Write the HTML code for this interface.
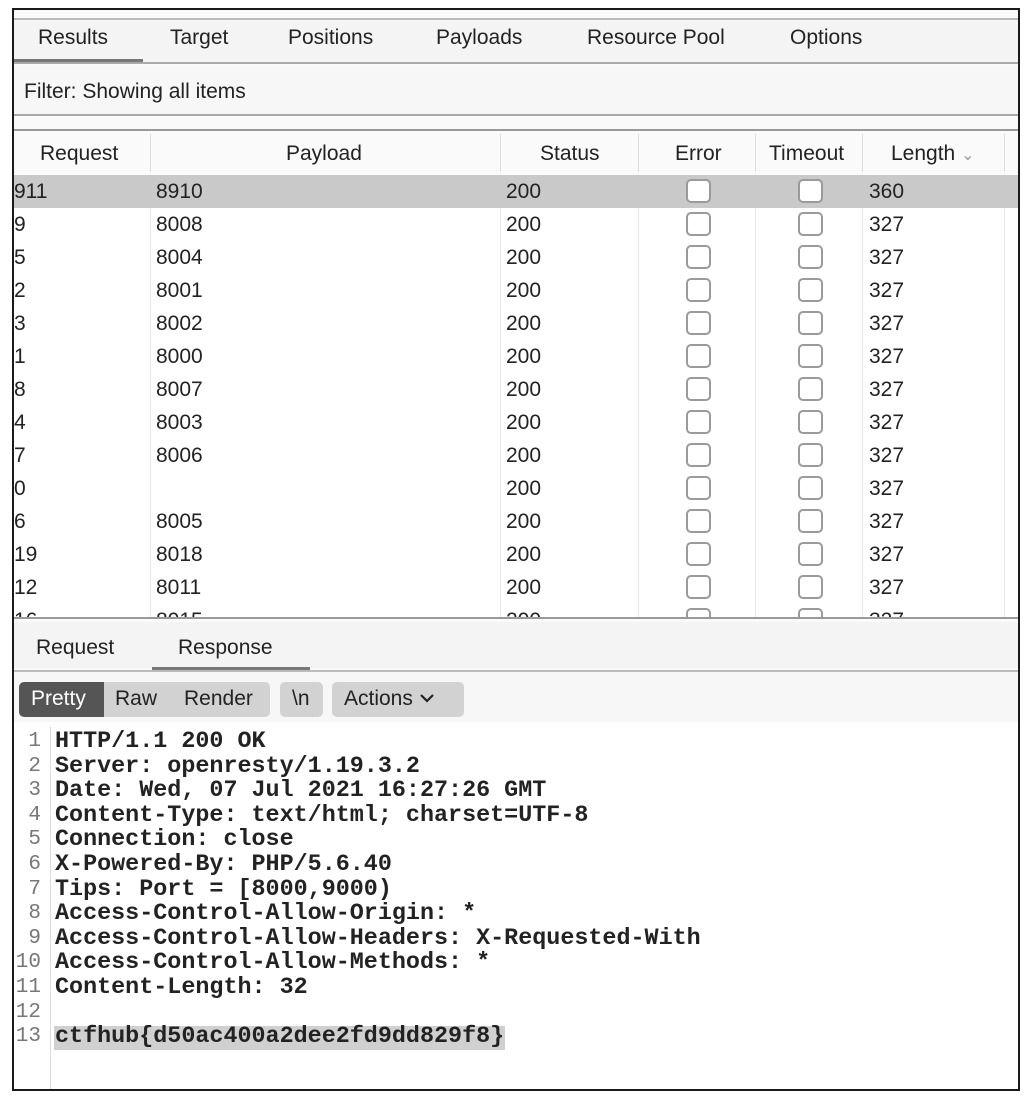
<!DOCTYPE html>
<html><head><meta charset="utf-8"><style>
*{margin:0;padding:0;box-sizing:border-box}
body{width:1032px;height:1099px;background:#fff;position:relative;overflow:hidden;font-family:"Liberation Sans",sans-serif;color:#222}
.abs{position:absolute}
.frame{left:12px;top:8px;width:1008px;height:1083px;border:2px solid #1a1a1a;background:#fafafa;overflow:hidden}
.t{position:absolute;font-size:21px;white-space:nowrap}
.hl{position:absolute;height:1px;background:#aaa}
.cb{position:absolute;width:25px;height:24px;border:2px solid #9a9a9a;border-radius:5px;background:#fff}
.row{position:absolute;left:0;width:1004px;height:33px}
.row span{position:absolute;top:5px;font-size:21px}
.vd{position:absolute;width:1px;background:#e8e8e8}
.code{position:absolute;left:0;font-family:"Liberation Mono",monospace;font-size:23.4px;font-weight:bold;line-height:24.6px;white-space:pre;color:#222}
.ln{position:absolute;left:0;width:27px;text-align:right;font-family:"Liberation Mono",monospace;font-size:21px;line-height:24.6px;color:#777;white-space:pre}
</style></head><body>
<div class="abs frame">
 <div class="hl" style="left:0;top:8px;width:1004px;background:#bbb;height:2px"></div>
 <div class="abs" style="left:0;top:10px;width:1004px;height:44px;background:#f4f4f4"></div>
 <span class="t" style="left:24px;top:16px">Results</span>
 <span class="t" style="left:156px;top:16px">Target</span>
 <span class="t" style="left:274px;top:16px">Positions</span>
 <span class="t" style="left:422px;top:16px">Payloads</span>
 <span class="t" style="left:573px;top:16px">Resource Pool</span>
 <span class="t" style="left:776px;top:16px">Options</span>
 <div class="abs" style="left:0;top:49px;width:129px;height:3px;background:#777"></div>
 <div class="hl" style="left:0;top:52px;width:1004px;background:#aaa;height:2px"></div>
 <div class="abs" style="left:0;top:56px;width:1004px;height:48px;background:#f7f7f7"></div>
 <span class="t" style="left:10px;top:70px">Filter: Showing all items</span>
 <div class="hl" style="left:0;top:104px;width:1004px;background:#aaa;height:2px"></div>
 <div class="hl" style="left:0;top:119px;width:1004px;background:#999;height:2px"></div>
 <div class="abs" style="left:0;top:121px;width:1004px;height:43px;background:#fafafa"></div>
 <div class="vd" style="left:136px;top:124px;height:38px;background:#ddd"></div>
 <div class="vd" style="left:486px;top:124px;height:38px;background:#ddd"></div>
 <div class="vd" style="left:624px;top:124px;height:38px;background:#ddd"></div>
 <div class="vd" style="left:741px;top:124px;height:38px;background:#ddd"></div>
 <div class="vd" style="left:848px;top:124px;height:38px;background:#ddd"></div>
 <div class="vd" style="left:990px;top:124px;height:38px;background:#ddd"></div>
 <span class="t" style="left:26px;top:132px">Request</span>
 <span class="t" style="left:272px;top:132px">Payload</span>
 <span class="t" style="left:526px;top:132px">Status</span>
 <span class="t" style="left:661px;top:132px">Error</span>
 <span class="t" style="left:755px;top:132px">Timeout</span>
 <span class="t" style="left:877px;top:132px">Length <span style="color:#999;font-size:16px">&#8964;</span></span>
 <div class="abs" style="left:0;top:164px;width:1004px;height:444px;background:#fff;overflow:hidden">
  <div class="vd" style="left:136px;top:0;height:444px"></div>
  <div class="vd" style="left:486px;top:0;height:444px"></div>
  <div class="vd" style="left:624px;top:0;height:444px"></div>
  <div class="vd" style="left:741px;top:0;height:444px"></div>
  <div class="vd" style="left:848px;top:0;height:444px"></div>
  <div class="vd" style="left:990px;top:0;height:444px"></div>
  <div class="row" style="top:1px;background:#c9c9c9"><span style="left:0">911</span><span style="left:142px">8910</span><span style="left:492px">200</span><span style="left:855px">360</span><div class="cb" style="left:672px;top:4px"></div><div class="cb" style="left:784px;top:4px"></div></div>
  <div class="row" style="top:34px"><span style="left:0">9</span><span style="left:142px">8008</span><span style="left:492px">200</span><span style="left:855px">327</span><div class="cb" style="left:672px;top:4px"></div><div class="cb" style="left:784px;top:4px"></div></div>
  <div class="row" style="top:67px"><span style="left:0">5</span><span style="left:142px">8004</span><span style="left:492px">200</span><span style="left:855px">327</span><div class="cb" style="left:672px;top:4px"></div><div class="cb" style="left:784px;top:4px"></div></div>
  <div class="row" style="top:100px"><span style="left:0">2</span><span style="left:142px">8001</span><span style="left:492px">200</span><span style="left:855px">327</span><div class="cb" style="left:672px;top:4px"></div><div class="cb" style="left:784px;top:4px"></div></div>
  <div class="row" style="top:133px"><span style="left:0">3</span><span style="left:142px">8002</span><span style="left:492px">200</span><span style="left:855px">327</span><div class="cb" style="left:672px;top:4px"></div><div class="cb" style="left:784px;top:4px"></div></div>
  <div class="row" style="top:166px"><span style="left:0">1</span><span style="left:142px">8000</span><span style="left:492px">200</span><span style="left:855px">327</span><div class="cb" style="left:672px;top:4px"></div><div class="cb" style="left:784px;top:4px"></div></div>
  <div class="row" style="top:199px"><span style="left:0">8</span><span style="left:142px">8007</span><span style="left:492px">200</span><span style="left:855px">327</span><div class="cb" style="left:672px;top:4px"></div><div class="cb" style="left:784px;top:4px"></div></div>
  <div class="row" style="top:232px"><span style="left:0">4</span><span style="left:142px">8003</span><span style="left:492px">200</span><span style="left:855px">327</span><div class="cb" style="left:672px;top:4px"></div><div class="cb" style="left:784px;top:4px"></div></div>
  <div class="row" style="top:265px"><span style="left:0">7</span><span style="left:142px">8006</span><span style="left:492px">200</span><span style="left:855px">327</span><div class="cb" style="left:672px;top:4px"></div><div class="cb" style="left:784px;top:4px"></div></div>
  <div class="row" style="top:298px"><span style="left:0">0</span><span style="left:492px">200</span><span style="left:855px">327</span><div class="cb" style="left:672px;top:4px"></div><div class="cb" style="left:784px;top:4px"></div></div>
  <div class="row" style="top:331px"><span style="left:0">6</span><span style="left:142px">8005</span><span style="left:492px">200</span><span style="left:855px">327</span><div class="cb" style="left:672px;top:4px"></div><div class="cb" style="left:784px;top:4px"></div></div>
  <div class="row" style="top:364px"><span style="left:0">19</span><span style="left:142px">8018</span><span style="left:492px">200</span><span style="left:855px">327</span><div class="cb" style="left:672px;top:4px"></div><div class="cb" style="left:784px;top:4px"></div></div>
  <div class="row" style="top:397px"><span style="left:0">12</span><span style="left:142px">8011</span><span style="left:492px">200</span><span style="left:855px">327</span><div class="cb" style="left:672px;top:4px"></div><div class="cb" style="left:784px;top:4px"></div></div>
  <div class="row" style="top:430px"><span style="left:0">16</span><span style="left:142px">8015</span><span style="left:492px">200</span><span style="left:855px">327</span><div class="cb" style="left:672px;top:4px"></div><div class="cb" style="left:784px;top:4px"></div></div>
 </div>
 <div class="hl" style="left:0;top:607px;width:1004px;background:#999;height:2px"></div>
 <div class="abs" style="left:820px;top:609px;font-size:12px;color:#888;letter-spacing:1px;line-height:10px">&#8226;&#8226;&#8226;</div>
 <div class="abs" style="left:0;top:612px;width:1004px;height:46px;background:#f4f4f4"></div>
 <span class="t" style="left:22px;top:626px">Request</span>
 <span class="t" style="left:164px;top:626px">Response</span>
 <div class="abs" style="left:138px;top:657px;width:158px;height:3px;background:#777"></div>
 <div class="hl" style="left:0;top:660px;width:1004px;background:#bbb;height:2px"></div>
 <div class="abs" style="left:0;top:662px;width:1004px;height:50px;background:#f7f7f7"></div>
 <div class="abs" style="left:5px;top:672px;width:85px;height:35px;background:#555;border-radius:5px 0 0 5px"></div>
 <div class="abs" style="left:90px;top:672px;width:166px;height:35px;background:#d2d2d2;border-radius:0 5px 5px 0"></div>
 <div class="abs" style="left:266px;top:672px;width:43px;height:35px;background:#d2d2d2;border-radius:5px"></div>
 <div class="abs" style="left:318px;top:672px;width:132px;height:35px;background:#d2d2d2;border-radius:5px"></div>
 <span class="t" style="left:17px;top:677px;color:#fff">Pretty</span>
 <span class="t" style="left:101px;top:677px">Raw</span>
 <span class="t" style="left:170px;top:677px">Render</span>
 <span class="t" style="left:278px;top:677px">\n</span>
 <span class="t" style="left:330px;top:677px">Actions <svg width="16" height="12" viewBox="0 0 16 12" style="vertical-align:1px"><path d="M2 3 L8 9 L14 3" fill="none" stroke="#222" stroke-width="2.2"/></svg></span>
 <div class="abs" style="left:0;top:712px;width:1004px;height:371px;background:#fff">
  <div class="vd" style="left:36px;top:5px;height:366px;background:#ddd"></div>
  <div class="abs" style="left:40px;top:304px;width:451px;height:24px;background:#d0d0d0"></div>
  <div class="ln" style="top:8px">1
2
3
4
5
6
7
8
9
10
11
12
13</div>
  <div class="code" style="left:41px;top:8px">HTTP/1.1 200 OK
Server: openresty/1.19.3.2
Date: Wed, 07 Jul 2021 16:27:26 GMT
Content-Type: text/html; charset=UTF-8
Connection: close
X-Powered-By: PHP/5.6.40
Tips: Port = [8000,9000)
Access-Control-Allow-Origin: *
Access-Control-Allow-Headers: X-Requested-With
Access-Control-Allow-Methods: *
Content-Length: 32

ctfhub{d50ac400a2dee2fd9dd829f8}</div>
 </div>
</div>
</body></html>
